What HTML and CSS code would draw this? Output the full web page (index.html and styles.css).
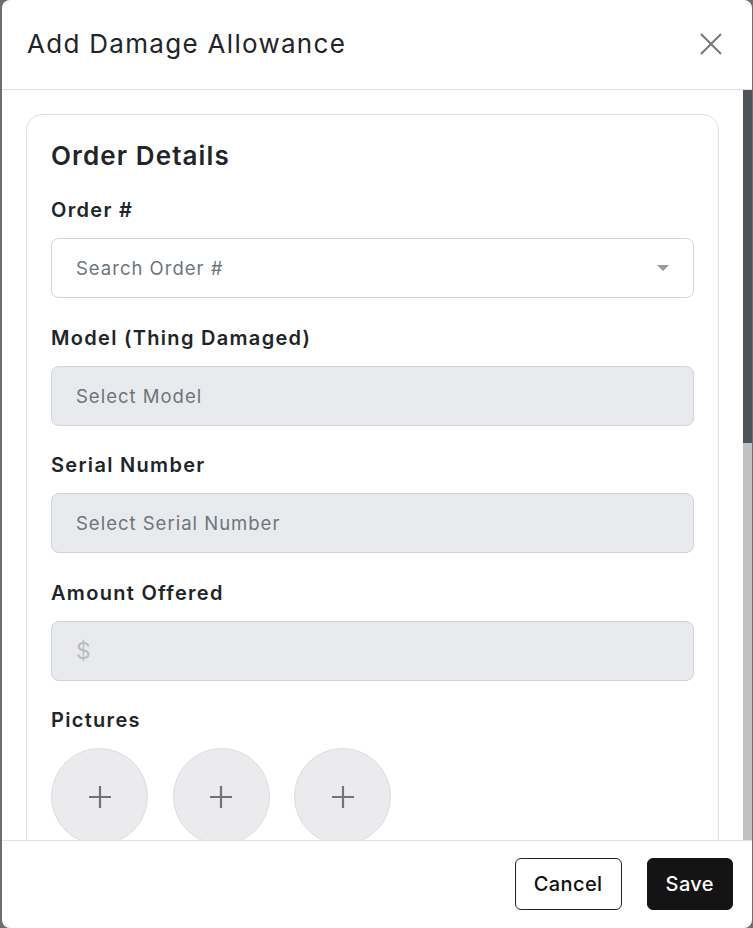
FILE: index.html
```html
<!DOCTYPE html>
<html lang="en">
<head>
<meta charset="utf-8">
<title>Add Damage Allowance</title>
<link rel="stylesheet" href="styles.css">
</head>
<body>
<div class="modal">
  <header class="modal-header">
    <h1 class="modal-title">Add Damage Allowance</h1>
    <button class="close-btn" aria-label="Close">
      <svg width="24" height="24" viewBox="0 0 24 24"><path d="M2 2 L22 22 M22 2 L2 22" stroke="#74797e" stroke-width="2" fill="none"/></svg>
    </button>
  </header>
  <div class="body-wrap">
    <div class="modal-body">
      <section class="card">
        <h2 class="card-title">Order Details</h2>
        <div class="field">
          <label class="field-label">Order #</label>
          <div class="input select">
            <span class="placeholder">Search Order #</span>
            <span class="caret"></span>
          </div>
        </div>
        <div class="field">
          <label class="field-label">Model (Thing Damaged)</label>
          <div class="input disabled"><span class="placeholder">Select Model</span></div>
        </div>
        <div class="field">
          <label class="field-label">Serial Number</label>
          <div class="input disabled"><span class="placeholder">Select Serial Number</span></div>
        </div>
        <div class="field">
          <label class="field-label">Amount Offered</label>
          <div class="input disabled"><span class="dollar">$</span></div>
        </div>
        <div class="field">
          <label class="field-label">Pictures</label>
          <div class="pictures">
            <div class="pic-add"><svg width="22" height="22" viewBox="0 0 22 22"><path d="M11 0 V22 M0 11 H22" stroke="#6f7479" stroke-width="2.2"/></svg></div>
            <div class="pic-add"><svg width="22" height="22" viewBox="0 0 22 22"><path d="M11 0 V22 M0 11 H22" stroke="#6f7479" stroke-width="2.2"/></svg></div>
            <div class="pic-add"><svg width="22" height="22" viewBox="0 0 22 22"><path d="M11 0 V22 M0 11 H22" stroke="#6f7479" stroke-width="2.2"/></svg></div>
          </div>
        </div>
      </section>
    </div>
    <div class="scrollbar"><div class="scroll-thumb"></div></div>
  </div>
  <footer class="modal-footer">
    <button class="btn btn-outline">Cancel</button>
    <button class="btn btn-dark">Save</button>
  </footer>
</div>
</body>
</html>
```
FILE: styles.css
```css
* { box-sizing: border-box; }
html, body { margin: 0; padding: 0; }
body {
  background: #6e6e6e;
  font-family: Inter, "Noto Sans", sans-serif;
  color: #212529;
  height: 928px;
  overflow: hidden;
}
.modal {
  margin: 0 1px 0 2px;
  height: 928px;
  background: #fff;
  border-radius: 8px;
  display: flex;
  flex-direction: column;
  overflow: hidden;
}
.modal-header {
  height: 90px;
  flex: none;
  border-bottom: 1px solid #dee2e6;
  display: flex;
  align-items: center;
  justify-content: space-between;
  padding: 0 29px 2px 25px;
}
.modal-title {
  margin: 0;
  font-size: 26px;
  font-weight: 400;
  letter-spacing: 1.3px;
}
.close-btn {
  border: 0;
  background: none;
  padding: 0;
  width: 24px;
  height: 24px;
  display: flex;
}
.body-wrap {
  flex: 1;
  min-height: 0;
  display: flex;
}
.modal-body {
  flex: 1;
  overflow: hidden;
  padding: 24px;
}
.scrollbar {
  width: 9px;
  flex: none;
  background: #c1c1c1;
}
.scroll-thumb {
  height: 353px;
  background: #4f545a;
}
.card {
  border: 1px solid #dee2e6;
  border-radius: 16px;
  padding: 26px 24px 24px 24px;
  min-height: 1545px;
}
.card-title {
  margin: 0 0 28px;
  font-size: 26px;
  line-height: 29px;
  font-weight: 600;
  letter-spacing: 1.1px;
}
.field { margin-bottom: 27.5px; }
.field-label {
  display: block;
  font-size: 20px;
  line-height: 24px;
  font-weight: 600;
  margin-bottom: 16px;
  letter-spacing: 1.3px;
}
.input {
  height: 60px;
  border: 1px solid #ced4da;
  border-radius: 8px;
  display: flex;
  align-items: center;
  padding: 0 24px;
  font-size: 18.5px;
  letter-spacing: 1px;
}
.input.disabled { background: #e9eaed; }
.select { justify-content: space-between; background: #fff; }
.placeholder { color: #6c757d; }
.caret {
  width: 0; height: 0;
  border-left: 6px solid transparent;
  border-right: 6px solid transparent;
  border-top: 6px solid #999;
}
.dollar { color: #b9bcc0; font-size: 23px; padding-left: 0; }
.pictures { display: flex; gap: 24.5px; }
.pic-add {
  width: 97px;
  height: 97px;
  border-radius: 50%;
  background: #ebebee;
  border: 1px solid #dcdde0;
  display: flex;
  align-items: center;
  justify-content: center;
}
.modal-footer {
  height: 88px;
  flex: none;
  border-top: 1px solid #dee2e6;
  display: flex;
  align-items: center;
  justify-content: flex-end;
  gap: 25px;
  padding: 0 19px 1px 0;
}
.btn {
  height: 52px;
  border-radius: 6px;
  font-family: inherit;
  font-size: 20px;
  font-weight: 500;
  padding: 0 18px;
  letter-spacing: 0.4px;
  cursor: pointer;
}
.btn-outline { background: #fff; border: 1px solid #212529; color: #111; }
.btn-dark { background: #141414; border: 1px solid #141414; color: #fff; }
```
